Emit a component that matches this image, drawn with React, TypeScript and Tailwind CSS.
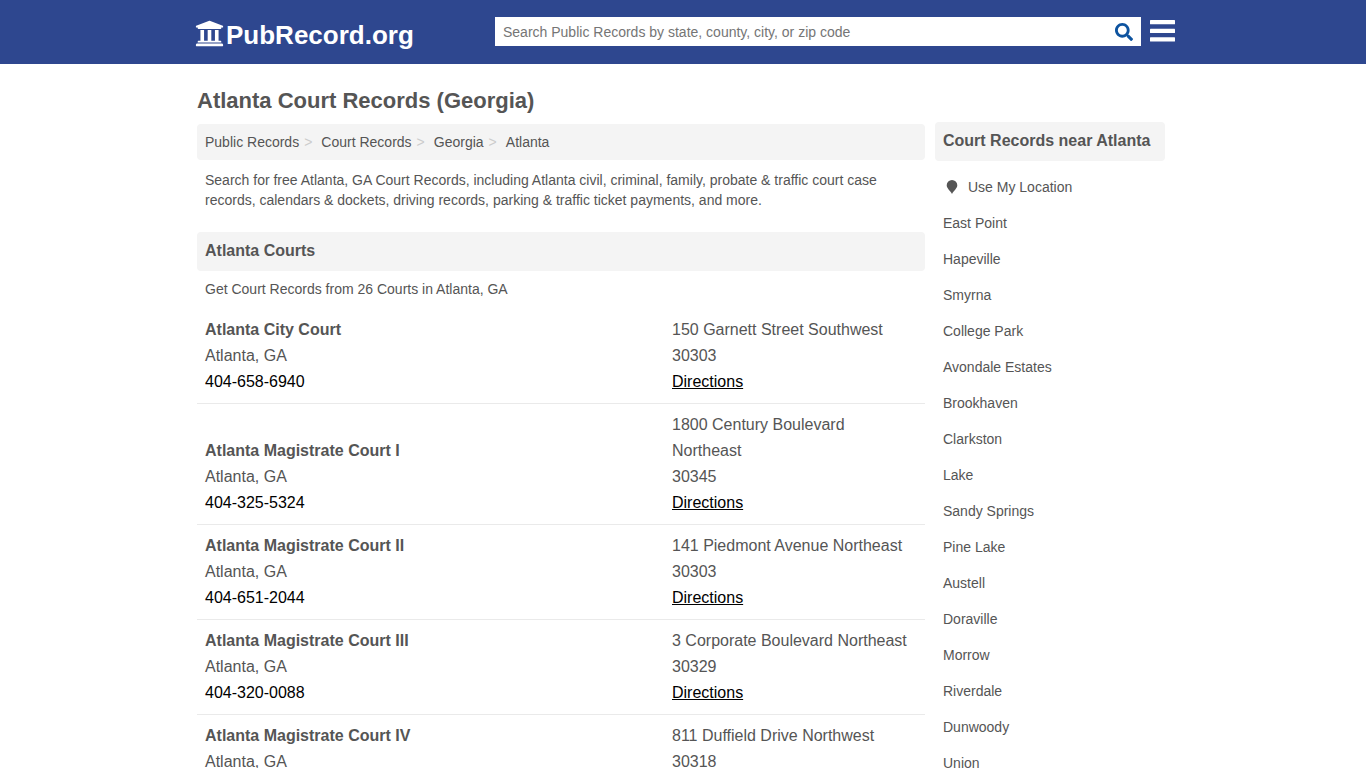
import { FaSearch, FaUniversity } from "react-icons/fa";

const breadcrumbs = ["Public Records", "Court Records", "Georgia"];

const courts = [
  {
    name: "Atlanta City Court",
    phone: "404-658-6940",
    street: "150 Garnett Street Southwest",
    zip: "30303",
  },
  {
    name: "Atlanta Magistrate Court I",
    phone: "404-325-5324",
    street: "1800 Century Boulevard Northeast",
    zip: "30345",
  },
  {
    name: "Atlanta Magistrate Court II",
    phone: "404-651-2044",
    street: "141 Piedmont Avenue Northeast",
    zip: "30303",
  },
  {
    name: "Atlanta Magistrate Court III",
    phone: "404-320-0088",
    street: "3 Corporate Boulevard Northeast",
    zip: "30329",
  },
  {
    name: "Atlanta Magistrate Court IV",
    street: "811 Duffield Drive Northwest",
    zip: "30318",
  },
];

const nearby = [
  "East Point",
  "Hapeville",
  "Smyrna",
  "College Park",
  "Avondale Estates",
  "Brookhaven",
  "Clarkston",
  "Lake",
  "Sandy Springs",
  "Pine Lake",
  "Austell",
  "Doraville",
  "Morrow",
  "Riverdale",
  "Dunwoody",
  "Union",
];

function MenuIcon() {
  return (
    <svg viewBox="0 0 25 24" className="h-6 w-[25px]" fill="currentColor" aria-hidden="true">
      <rect width="25" height="4.300" rx=".5" />
      <rect y="8.700" width="25" height="4.300" rx=".5" />
      <rect y="17.300" width="25" height="4.300" rx=".5" />
    </svg>
  );
}

function PinIcon() {
  return (
    <svg viewBox="0 0 12 14" className="h-[14px] w-[12px]" fill="currentColor" aria-hidden="true">
      <path d="M6 0a5.300 5.300 0 0 0-5.300 5.300C.7 8.400 4.500 11 6 14c1.500-3 5.300-5.600 5.300-8.700A5.300 5.300 0 0 0 6 0z" />
    </svg>
  );
}

function Header() {
  return (
    <header className="bg-[#2e478f]">
      <div className="mx-auto flex h-16 max-w-[984px] items-center pb-px pl-1">
        <a href="#" className="flex w-[300px] shrink-0 items-start gap-[2px] pt-[6px] text-white">
          <FaUniversity className="h-[29px] w-[29px]" />
          <span className="text-[26px] leading-8 font-bold">PubRecord.org</span>
        </a>
        <form className="flex h-[29px] min-w-0 flex-1 items-center bg-white">
          <input
            type="text"
            aria-label="Search Public Records"
            placeholder="Search Public Records by state, county, city, or zip code"
            className="h-full min-w-0 flex-1 px-2 text-sm outline-none placeholder:text-[#757575]"
          />
          <button type="submit" aria-label="Search" className="px-2 text-[#0d539f]">
            <FaSearch className="h-[18px] w-[18px]" />
          </button>
        </form>
        <button type="button" aria-label="Menu" className="ml-[9px] text-white">
          <MenuIcon />
        </button>
      </div>
    </header>
  );
}

export default function App() {
  return (
    <div className="bg-white font-['Liberation_Sans',Arial,sans-serif] text-sm leading-5 text-[#555]">
      <Header />
      <div className="mx-auto max-w-[972px] pr-1">
        <h1 className="pt-6 text-[22px] leading-[26px] font-bold">Atlanta Court Records (Georgia)</h1>
        <div className="flex items-start gap-[10px] pt-2">
          <main className="min-w-0 flex-1 pt-[2px]">
            <nav aria-label="Breadcrumb" className="rounded bg-[#f4f4f4] px-2 py-2">
              <ol className="flex">
                {breadcrumbs.map((item) => (
                  <li key={item}>
                    <a href="#">{item}</a>
                    <span className="mr-[9px] ml-[5px] text-[#ccc]">&gt;</span>
                  </li>
                ))}
                <li>Atlanta</li>
              </ol>
            </nav>
            <p className="px-2 pt-[10px]">
              Search for free Atlanta, GA Court Records, including Atlanta civil, criminal, family,
              probate &amp; traffic court case records, calendars &amp; dockets, driving records,
              parking &amp; traffic ticket payments, and more.
            </p>
            <h2 className="mt-[22px] rounded bg-[#f4f4f4] px-2 pt-[9px] pb-[10px] text-base leading-5 font-bold">
              Atlanta Courts
            </h2>
            <p className="px-2 pt-2">Get Court Records from 26 Courts in Atlanta, GA</p>
            <table className="mt-[10px] w-full table-fixed text-base leading-[26px]">
              <tbody>
                {courts.map((court) => (
                  <tr key={court.name} className="border-b border-[#eaeaea] align-bottom">
                    <td className="p-2">
                      <a href="#" className="font-bold">
                        {court.name}
                      </a>
                      <div>Atlanta, GA</div>
                      {court.phone && (
                        <a href={`tel:${court.phone}`} className="text-black">
                          {court.phone}
                        </a>
                      )}
                    </td>
                    <td className="w-[261px] p-2">
                      <div>{court.street}</div>
                      <div>{court.zip}</div>
                      {court.phone && (
                        <a href="#" className="text-black underline">
                          Directions
                        </a>
                      )}
                    </td>
                  </tr>
                ))}
              </tbody>
            </table>
          </main>
          <aside className="w-[230px] shrink-0">
            <h2 className="rounded bg-[#f4f4f4] px-2 pt-[9px] pb-[10px] text-base leading-5 font-bold">
              Court Records near Atlanta
            </h2>
            <ul className="pt-2">
              <li>
                <a href="#" className="flex items-center gap-[10px] py-2 pr-2 pl-[11px]">
                  <PinIcon />
                  Use My Location
                </a>
              </li>
              {nearby.map((city) => (
                <li key={city}>
                  <a href="#" className="block p-2">
                    {city}
                  </a>
                </li>
              ))}
            </ul>
          </aside>
        </div>
      </div>
    </div>
  );
}
